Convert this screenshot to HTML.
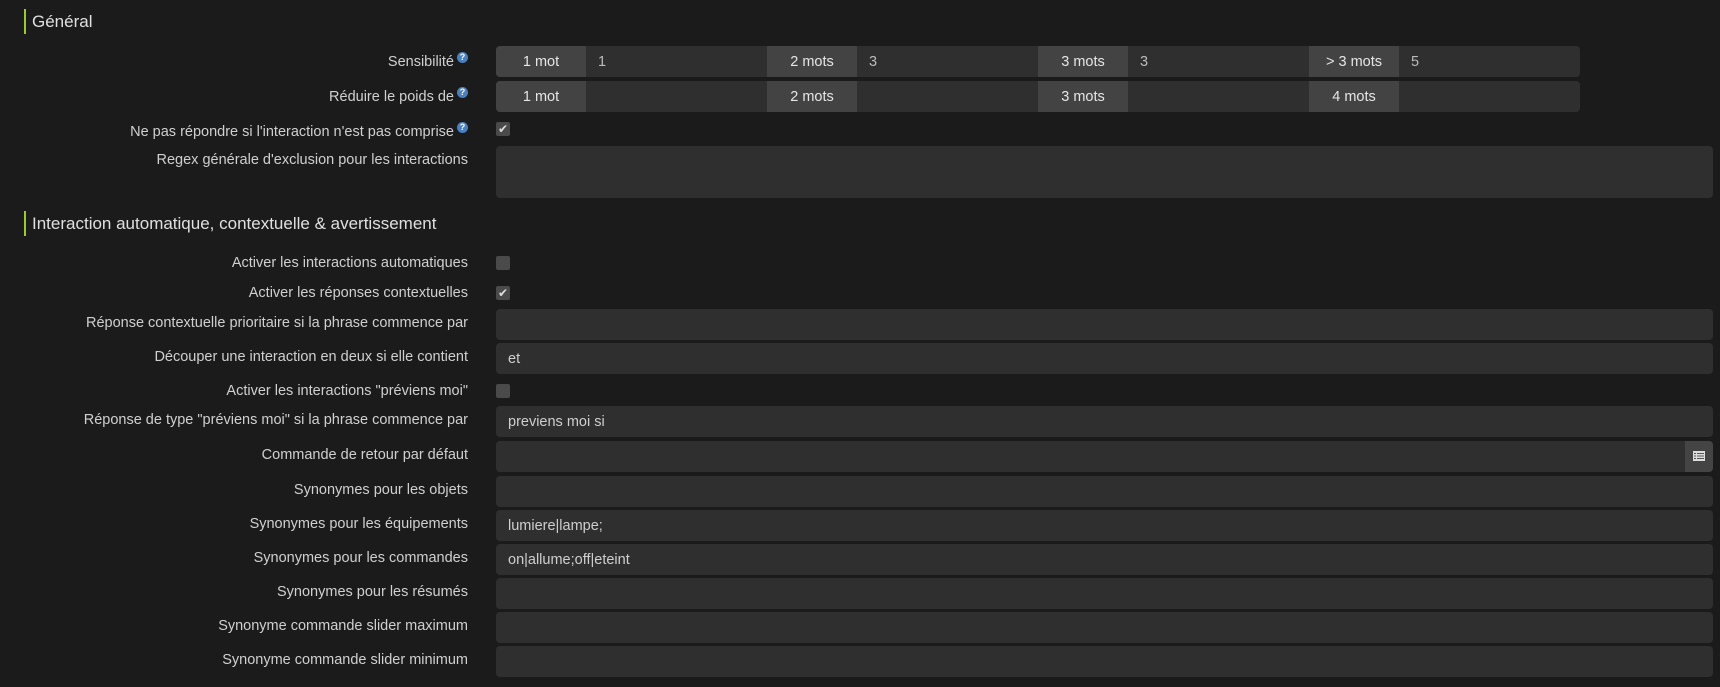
<!DOCTYPE html>
<html><head><meta charset="utf-8"><style>
*{box-sizing:border-box;margin:0;padding:0}
body{width:1720px;height:687px;overflow:hidden;background:#1b1b1b;font-family:"Liberation Sans",sans-serif;color:#d6d6d6;position:relative}
.h{position:absolute;left:24px;border-left:2px solid #9acd1e;padding-left:6px;font-size:17px;color:#e0e0e0;height:25px;line-height:25px}
.l{position:absolute;right:1252px;font-size:14.5px;text-align:right;white-space:nowrap;color:#d0d0d0;margin-top:2px}
.q{display:inline-block;width:11px;height:11px;border-radius:50%;background:#4a7fc1;color:#fff;font-size:9px;line-height:11px;text-align:center;font-weight:bold;vertical-align:6px;margin-left:3px}
.i{position:absolute;left:496px;width:1217px;height:31px;background:#2f2f2f;border-radius:4px;font-size:14.5px;line-height:33px;padding-left:12px;color:#cfcfcf}
.g{position:absolute;left:496px;width:1084px;height:31px;background:#2f2f2f;border-radius:4px;overflow:hidden;display:flex}
.a{width:90px;background:#434343;text-align:center;line-height:33px;font-size:14.5px;color:#e6e6e6}
.v{width:181px;line-height:33px;padding-left:12px;font-size:14.5px;color:#bbb}
.c{position:absolute;left:496px;width:14px;height:14px;background:#4a4a4a;border-radius:2px;color:#ddd;font-size:12px;line-height:14px;text-align:center}
</style></head><body>
<div class="h" style="top:9px">Général</div>
<div class="l" style="top:50px">Sensibilité<span class="q">?</span></div>
<div class="g" style="top:46px"><div class="a">1 mot</div><div class="v">1</div><div class="a">2 mots</div><div class="v">3</div><div class="a">3 mots</div><div class="v">3</div><div class="a">&gt; 3 mots</div><div class="v">5</div></div>
<div class="l" style="top:85px">Réduire le poids de<span class="q">?</span></div>
<div class="g" style="top:81px"><div class="a">1 mot</div><div class="v"></div><div class="a">2 mots</div><div class="v"></div><div class="a">3 mots</div><div class="v"></div><div class="a">4 mots</div><div class="v"></div></div>
<div class="l" style="top:120px">Ne pas répondre si l'interaction n'est pas comprise<span class="q">?</span></div>
<div class="c" style="top:122px">✔</div>
<div class="l" style="top:150px">Regex générale d'exclusion pour les interactions</div>
<div class="i" style="top:146px;height:52px"></div>
<div class="h" style="top:211px">Interaction automatique, contextuelle &amp; avertissement</div>
<div class="l" style="top:253px">Activer les interactions automatiques</div>
<div class="c" style="top:256px"></div>
<div class="l" style="top:283px">Activer les réponses contextuelles</div>
<div class="c" style="top:286px">✔</div>
<div class="l" style="top:313px">Réponse contextuelle prioritaire si la phrase commence par</div>
<div class="i" style="top:309px"></div>
<div class="l" style="top:347px">Découper une interaction en deux si elle contient</div>
<div class="i" style="top:343px">et</div>
<div class="l" style="top:381px">Activer les interactions "préviens moi"</div>
<div class="c" style="top:384px"></div>
<div class="l" style="top:410px">Réponse de type "préviens moi" si la phrase commence par</div>
<div class="i" style="top:406px">previens moi si</div>
<div class="l" style="top:445px">Commande de retour par défaut</div>
<div class="i" style="top:441px"><div style="position:absolute;right:0;top:0;width:28px;height:31px;background:#444;border-radius:0 4px 4px 0"><svg width="12" height="10" style="position:absolute;left:8px;top:10px"><rect x="0" y="0" width="12" height="10" fill="#ddd"/><g fill="#555"><rect x="1" y="2" width="2" height="1"/><rect x="4" y="2" width="7" height="1"/><rect x="1" y="4.5" width="2" height="1"/><rect x="4" y="4.5" width="7" height="1"/><rect x="1" y="7" width="2" height="1"/><rect x="4" y="7" width="7" height="1"/></g></svg></div></div>
<div class="l" style="top:480px">Synonymes pour les objets</div>
<div class="i" style="top:476px"></div>
<div class="l" style="top:514px">Synonymes pour les équipements</div>
<div class="i" style="top:510px">lumiere|lampe;</div>
<div class="l" style="top:548px">Synonymes pour les commandes</div>
<div class="i" style="top:544px">on|allume;off|eteint</div>
<div class="l" style="top:582px">Synonymes pour les résumés</div>
<div class="i" style="top:578px"></div>
<div class="l" style="top:616px">Synonyme commande slider maximum</div>
<div class="i" style="top:612px"></div>
<div class="l" style="top:650px">Synonyme commande slider minimum</div>
<div class="i" style="top:646px"></div>
</body></html>
